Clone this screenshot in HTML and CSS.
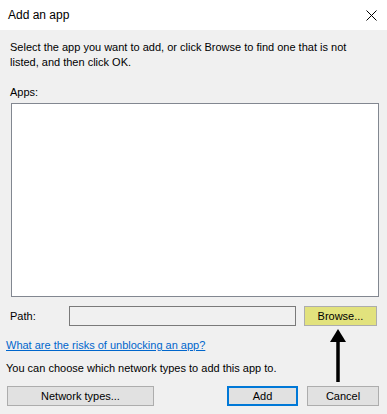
FILE: index.html
```html
<!DOCTYPE html>
<html lang="en">
  <head>
    <meta charset="UTF-8" />
    <meta name="viewport" content="width=device-width, initial-scale=1.0" />
    <title>Add an app</title>
    <link rel="stylesheet" href="styles.css">
  </head>
  <body>
    <div class="dialog">
      <header class="titlebar">
        <span class="title">Add an app</span>
        <svg class="close" width="11" height="11" viewBox="0 0 11 11">
          <path d="M0.5 0.5 L10.5 10.5 M10.5 0.5 L0.5 10.5" stroke="#000" stroke-width="1" fill="none" />
        </svg>
      </header>
      <main class="content">
        <p class="intro">Select the app you want to add, or click Browse to find one that is not listed, and then click OK.</p>
        <label class="apps-label">Apps:</label>
        <div class="app-list"></div>
        <div class="path-row">
          <label class="path-label">Path:</label>
          <input class="path-input" type="text" disabled />
          <button class="btn browse">Browse...</button>
        </div>
        <a href="#" class="risk-link">What are the risks of unblocking an app?</a>
        <p class="note">You can choose which network types to add this app to.</p>
        <div class="button-row">
          <button class="btn network">Network types...</button>
          <div class="spacer"></div>
          <button class="btn add">Add</button>
          <button class="btn cancel">Cancel</button>
        </div>
      </main>
      <!-- annotation arrow pointing to Browse -->
      <svg class="arrow" width="18" height="54" viewBox="0 0 18 54">
        <polygon points="9,0 17,13 1,13" fill="#000" />
        <line x1="9" y1="10" x2="9" y2="53" stroke="#000" stroke-width="3.5" />
      </svg>
    </div>
  </body>
</html>
```
FILE: styles.css
```css
:root {
  --dialog-bg: #f0f0f0;
  --btn-bg: #e1e1e1;
  --btn-border: #adadad;
  --accent: #0078d7;
  --link: #0066cc;
}
* { box-sizing: border-box; margin: 0; padding: 0; }
html, body { width: 387px; height: 414px; overflow: hidden; }
body { font-family: "Liberation Sans", Arial, sans-serif; font-size: 11px; color: #000; background: var(--dialog-bg); }
.dialog { position: relative; width: 387px; height: 414px; display: flex; flex-direction: column; }

.titlebar { height: 30px; background: #fff; display: flex; align-items: center; padding: 0 10px 0 8px; }
.title { flex: 1; font-size: 12px; line-height: 15px; }
.close { display: block; }

.content { flex: 1; display: flex; flex-direction: column; padding: 0 8px 0 10px; line-height: 15px; }
.intro { margin-top: 10px; padding-right: 10px; }
.apps-label { display: block; margin-top: 15px; }
.app-list { margin: 3px 0 0 1px; height: 194px; background: #fff; border: 1px solid #828790; }

.path-row { display: flex; align-items: center; margin-top: 9px; height: 20px; }
.path-label { width: 59px; }
.path-input { width: 227px; height: 20px; border: 1px solid #7a7a7a; background: var(--dialog-bg); }
.btn { font-family: inherit; font-size: 11px; color: #000; background: var(--btn-bg); border: 1px solid var(--btn-border); height: 20px; line-height: 16px; }
.browse { width: 73px; margin-left: 8px; background: #e2e27d; }

.risk-link { display: block; margin-top: 12px; margin-left: -4px; color: var(--link); text-decoration: underline; width: max-content; }
.note { margin-top: 8px; margin-left: -4px; }

.button-row { display: flex; margin-top: 10px; margin-left: -3px; }
.network { width: 147px; }
.spacer { flex: 1; }
.add { width: 71px; border: 2px solid var(--accent); }
.cancel { width: 72px; margin-left: 9px; }

.arrow { position: absolute; left: 329px; top: 329px; }
```
